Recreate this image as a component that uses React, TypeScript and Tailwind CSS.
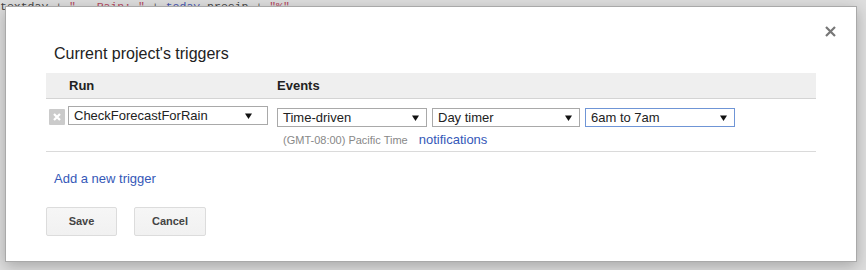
import React from 'react';

function Arrow() {
  return (
    <svg width="7" height="6" viewBox="0 0 7 6" className="shrink-0">
      <polygon points="0,0.5 7,0.5 3.5,6" fill="#111" />
    </svg>
  );
}

interface FakeSelectProps {
  value: string;
  width: string;
  arrowPad: string;
  focused?: boolean;
}

function FakeSelect({ value, width, arrowPad, focused }: FakeSelectProps) {
  return (
    <div
      className={`flex h-[19px] items-center justify-between bg-white pl-[5px] text-[13px] leading-[15px] text-[#222] ${width} ${arrowPad} ${
        focused ? 'border border-[#6f95d6]' : 'border border-[#a9a9a9]'
      }`}
    >
      <span>{value}</span>
      <Arrow />
    </div>
  );
}

export default function App() {
  return (
    <div
      className="relative h-[270px] w-[866px] overflow-hidden bg-[#dedede]"
      style={{ fontFamily: '"Liberation Sans", Arial, sans-serif' }}
    >
      {/* editor code behind the modal */}
      <div
        className="whitespace-pre text-[11.5px] leading-[14px] text-[#555]"
        style={{ fontFamily: '"Liberation Mono", monospace' }}
      >
        <span className="text-[#444]">textday</span> +{' '}
        <span className="text-[#b5485e]">" - Rain: "</span> +{' '}
        <span className="text-[#4a58b0]">today</span>
        <span className="text-[#444]">.precip</span> +{' '}
        <span className="text-[#b5485e]">"%"</span>
      </div>

      {/* dialog */}
      <div className="absolute left-[5px] top-[6px] h-[256px] w-[852px] border border-[#a9a9a9] bg-white pl-[40px] pt-[37px] shadow-[0_4px_14px_rgba(0,0,0,0.25)]">
        <button className="absolute right-[20px] top-[18px] flex h-[12px] w-[12px] items-center justify-center">
          <svg width="11" height="11" viewBox="0 0 11 11">
            <path d="M1 1 L10 10 M10 1 L1 10" stroke="#777" strokeWidth="2.2" />
          </svg>
        </button>

        <h2 className="ml-[8px] text-[16px] font-normal leading-[19px] text-[#222]">
          Current project's triggers
        </h2>

        <div className="mt-[10px] w-[770px]">
          {/* header */}
          <div className="flex h-[26px] items-center border-b border-[#d4d4d4] bg-[#efefef] text-[13px] font-bold text-[#222]">
            <div className="w-[231px] pl-[23px]">Run</div>
            <div>Events</div>
          </div>

          {/* trigger row */}
          <div className="flex items-start border-b border-[#dadada] pb-[3px] pt-[7px]">
            <div className="flex w-[231px] items-center pl-[3px]">
              <div className="mt-[2px] flex h-[16px] w-[16px] items-center justify-center rounded-[1px] bg-[#cbcbcb]">
                <svg width="10" height="10" viewBox="0 0 10 10">
                  <path d="M2 2 L8 8 M8 2 L2 8" stroke="#fff" strokeWidth="2.2" />
                </svg>
              </div>
              <div className="ml-[3px]">
                <FakeSelect value="CheckForecastForRain" width="w-[200px]" arrowPad="pr-[15px]" />
              </div>
            </div>
            <div className="mt-[2px] flex flex-col">
              <div className="flex gap-[5px]">
                <FakeSelect value="Time-driven" width="w-[150px]" arrowPad="pr-[7px]" />
                <FakeSelect value="Day timer" width="w-[148px]" arrowPad="pr-[7px]" />
                <FakeSelect value="6am to 7am" width="w-[150px]" arrowPad="pr-[7px]" focused />
              </div>
              <div className="mt-[5px] flex items-baseline pl-[6px] leading-[15px]">
                <span className="text-[11px] text-[#888]">(GMT-08:00) Pacific Time</span>
                <a className="ml-[11px] cursor-pointer text-[13px] text-[#3558b8]">notifications</a>
              </div>
            </div>
          </div>
        </div>

        <a className="ml-[8px] mt-[19px] block cursor-pointer text-[13px] leading-[15px] text-[#3558b8]">
          Add a new trigger
        </a>

        <div className="mt-[21px] flex gap-[17px]">
          <button className="h-[29px] w-[71px] rounded-[2px] border border-[#dcdcdc] bg-gradient-to-b from-[#f6f6f6] to-[#f1f1f1] text-[11px] font-bold text-[#444]">
            Save
          </button>
          <button className="h-[29px] w-[72px] rounded-[2px] border border-[#dcdcdc] bg-gradient-to-b from-[#f6f6f6] to-[#f1f1f1] text-[11px] font-bold text-[#444]">
            Cancel
          </button>
        </div>
      </div>
    </div>
  );
}
